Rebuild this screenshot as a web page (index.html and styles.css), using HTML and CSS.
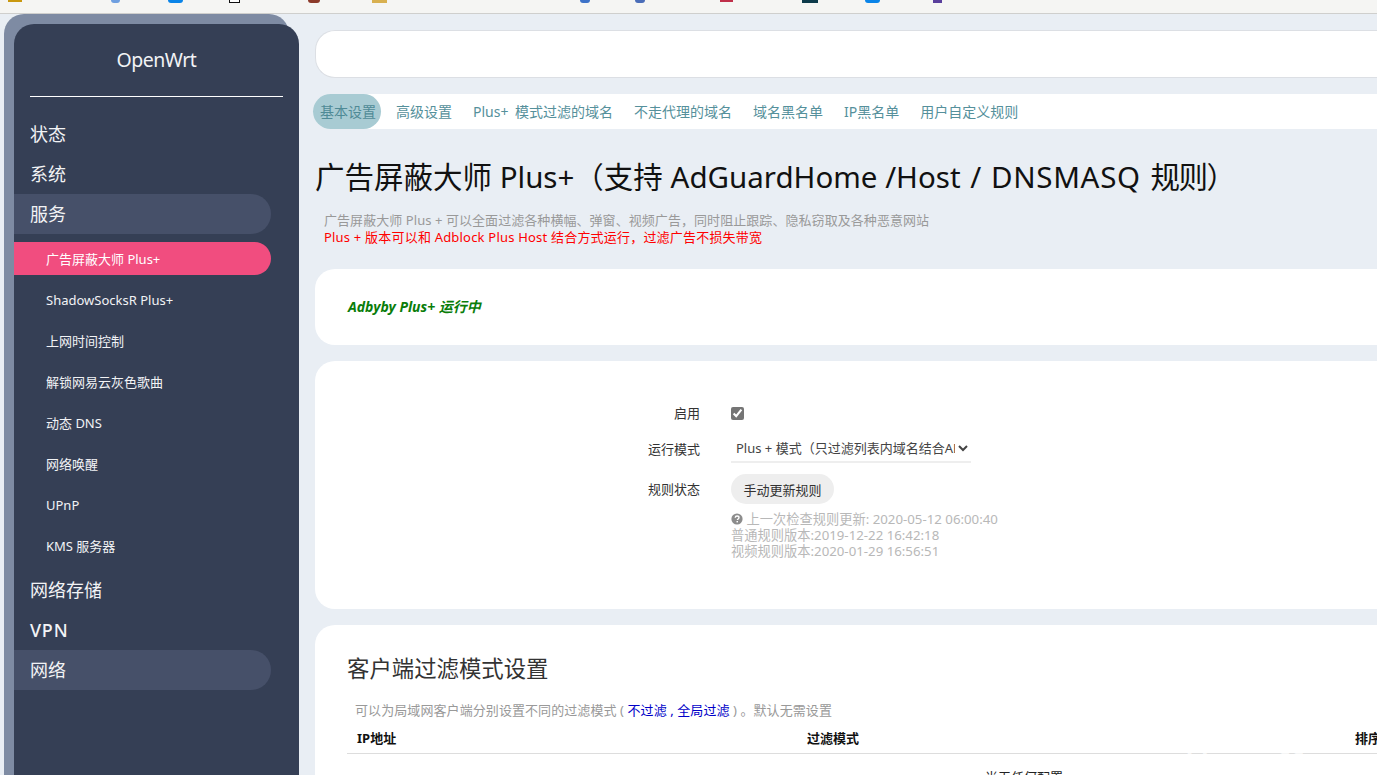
FILE: index.html
```html
<!DOCTYPE html>
<html lang="zh-CN">
<head>
<meta charset="utf-8">
<title>OpenWrt</title>
<link rel="stylesheet" href="styles.css">
</head>
<body>
<div class="bookmarks">
  <span class="bm bm1"></span><span class="bm bm2"></span><span class="bm bm3"></span><span class="bm bm4"></span>
  <span class="bm bm5"></span><span class="bm bm6"></span><span class="bm bm7"></span><span class="bm bm8"></span>
  <span class="bm bm9"></span><span class="bm bm10"></span><span class="bm bm11"></span><span class="bm bm12"></span>
</div>
<div class="app">
  <aside class="side-back">
    <nav class="sidebar">
      <div class="brand">OpenWrt</div>
      <div class="brand-rule"></div>
      <ul class="menu">
        <li class="menu-item">状态</li>
        <li class="menu-item">系统</li>
        <li class="menu-item menu-open">服务</li>
        <li class="sub-item sub-active">广告屏蔽大师 Plus+</li>
        <li class="sub-item">ShadowSocksR Plus+</li>
        <li class="sub-item">上网时间控制</li>
        <li class="sub-item">解锁网易云灰色歌曲</li>
        <li class="sub-item">动态 DNS</li>
        <li class="sub-item">网络唤醒</li>
        <li class="sub-item">UPnP</li>
        <li class="sub-item">KMS 服务器</li>
        <li class="menu-item">网络存储</li>
        <li class="menu-item menu-latin">VPN</li>
        <li class="menu-item menu-open">网络</li>
      </ul>
    </nav>
  </aside>
  <main class="main">
    <div class="top-card"></div>
    <ul class="tabs">
      <li class="tab tab-active">基本设置</li>
      <li class="tab">高级设置</li>
      <li class="tab">Plus+ 模式过滤的域名</li>
      <li class="tab">不走代理的域名</li>
      <li class="tab">域名黑名单</li>
      <li class="tab">IP黑名单</li>
      <li class="tab">用户自定义规则</li>
    </ul>
    <h2 class="page-title">广告屏蔽大师 Plus+（支持 AdGuardHome <span class="title-rules">/Host / <span class="title-dns">DNSMASQ</span> <span class="title-tail">规则）</span></span></h2>
    <div class="page-desc">
      <div>广告屏蔽大师 Plus + 可以全面过滤各种横幅、弹窗、视频广告，同时阻止跟踪、隐私窃取及各种恶意网站</div>
      <div class="desc-red">Plus + 版本可以和 Adblock Plus Host 结合方式运行，过滤广告不损失带宽</div>
    </div>
    <section class="card status-card"><em class="status">Adbyby Plus+ 运行中</em></section>
    <section class="card form-card">
      <div class="row row-check">
        <label class="field-label">启用</label>
        <input class="check" type="checkbox" checked>
      </div>
      <div class="row row-select">
        <label class="field-label">运行模式</label>
        <select class="select"><option>Plus + 模式（只过滤列表内域名结合ABP规则）</option></select>
      </div>
      <div class="row row-button">
        <label class="field-label">规则状态</label>
        <div class="field-body">
          <button class="btn" type="button">手动更新规则</button>
          <div class="help">
            <div><svg class="help-icon" viewBox="0 0 12 12"><circle cx="6" cy="6" r="5.6" fill="#8c8c8c"/><path d="M4.2 4.7c.1-1.1.9-1.7 1.9-1.7 1.1 0 1.9.7 1.9 1.6 0 1.3-1.6 1.4-1.6 2.5" fill="none" stroke="#fff" stroke-width="1.4"/><rect x="5.5" y="8" width="1.5" height="1.4" fill="#fff"/></svg> 上一次检查规则更新: 2020-05-12 06:00:40</div>
            <div>普通规则版本:2019-12-22 16:42:18</div>
            <div>视频规则版本:2020-01-29 16:56:51</div>
          </div>
        </div>
      </div>
    </section>
    <section class="card table-card">
      <h3 class="section-title">客户端过滤模式设置</h3>
      <div class="section-desc">可以为局域网客户端分别设置不同的过滤模式 ( <span class="blue">不过滤 , 全局过滤</span> ) 。默认无需设置</div>
      <div class="thead">
        <span class="th th-ip">IP地址</span>
        <span class="th th-mode">过滤模式</span>
        <span class="th">排序</span>
      </div>
      <div class="empty">尚无任何配置</div>
    </section>
  </main>
</div>
<div class="watermark">bbs.nas66.com</div>
</body>
</html>
```
FILE: styles.css
```css
* { box-sizing: border-box; }
html, body { margin: 0; padding: 0; height: 775px; overflow: hidden; }
body {
  background: #e9eef4;
  font-family: "Noto Sans", "Noto Sans CJK SC", sans-serif;
  font-size: 13px;
  color: #333;
  position: relative;
}
ul { list-style: none; margin: 0; padding: 0; }

.bookmarks {
  height: 14px;
  background: #f5f5f3;
  border-bottom: 1px solid #cfcfcd;
  display: flex;
  align-items: flex-start;
}
.bm { display: block; height: 2px; flex: none; }
.bm1 { margin-left: 8px; width: 14px; background: #c9980f; }
.bm2 { margin-left: 89px; width: 9px; height: 3px; background: #6f9fe0; border-radius: 0 0 4px 4px; }
.bm3 { margin-left: 48px; width: 15px; height: 3px; background: #0a84e8; border-radius: 0 0 3px 3px; }
.bm4 { margin-left: 46px; width: 11px; height: 3px; background: #fff; border: 1px solid #111; border-top: 0; }
.bm5 { margin-left: 68px; width: 12px; height: 3px; background: #8c3a2a; border-radius: 0 0 4px 4px; }
.bm6 { margin-left: 52px; width: 15px; height: 3px; background: #d8b050; }
.bm7 { margin-left: 193px; width: 10px; height: 3px; background: #3d72c8; border-radius: 0 0 5px 5px; }
.bm8 { margin-left: 45px; width: 10px; height: 3px; background: #4a6db8; border-radius: 0 0 4px 4px; }
.bm9 { margin-left: 75px; width: 13px; height: 2px; background: #c0304a; }
.bm10 { margin-left: 69px; width: 16px; height: 3px; background: #0d3a4a; }
.bm11 { margin-left: 47px; width: 15px; height: 3px; background: #0a84e8; border-radius: 0 0 3px 3px; }
.bm12 { margin-left: 53px; width: 9px; height: 3px; background: #5a3f9c; }

.app { display: flex; align-items: stretch; height: 761px; overflow: hidden; }

.side-back {
  flex: none;
  width: 285px;
  margin-left: 4px;
  padding: 10px 0 0 10px;
  background: #7e8ba3;
  border-radius: 20px 20px 0 0;
}
.sidebar {
  width: 285px;
  height: 100%;
  background: #353f55;
  border-radius: 20px 20px 0 0;
  color: #f2f3f5;
}
.brand {
  height: 72px;
  padding-top: 22px;
  text-align: center;
  font-size: 19.5px;
  line-height: 28px;
  letter-spacing: -.5px;
}
.brand-rule { height: 1px; background: #fff; margin: 0 16px; }
.menu { padding-top: 17px; }
.menu-item {
  height: 40px;
  width: 257px;
  padding-left: 16px;
  font-size: 18px;
  line-height: 40px;
  border-radius: 0 20px 20px 0;
}
.menu-latin { font-weight: 500; letter-spacing: .8px; }
.menu-open { background: #465069; margin-bottom: 8px; }
.menu-item:last-child { margin-bottom: 0; }
.sub-item {
  height: 33px;
  width: 257px;
  margin-bottom: 8px;
  padding-left: 32px;
  font-size: 13px;
  line-height: 35px;
  border-radius: 0 17px 17px 0;
}
.sub-active { background: #f14d7f; color: #fff; }

.main {
  flex: none;
  width: 1100px;
  margin-left: 26px;
  padding-top: 16px;
}
.top-card {
  height: 48px;
  background: #fff;
  border: 1px solid #dcdfe4;
  border-right: 0;
  border-radius: 20px 0 0 20px;
}
.tabs {
  display: flex;
  height: 35px;
  margin: 16px 0 0 -2px;
  background: #fff;
  border-radius: 18px 0 0 18px;
  color: #55909b;
  font-size: 14px;
  line-height: 36px;
  word-spacing: 3px;
}
.tab { padding: 0 7px; margin-right: 7px; white-space: nowrap; }
.tab-active { width: 68px; margin-right: 8px; padding: 0 0 0 7px; background: #a8cbd3; border-radius: 18px; color: #4f8a96; }

.page-title {
  margin: 28px 0 0;
  font-size: 29.5px;
  line-height: 40px;
  font-weight: 400;
  color: #111;
  white-space: nowrap;
}
.title-rules { word-spacing: 2px; }
.title-dns { letter-spacing: .7px; }
.title-tail { letter-spacing: -1.5px; }
.page-desc {
  margin: 15px 0 0 9px;
  font-size: 13px;
  line-height: 17px;
  letter-spacing: .06px;
  color: #999;
}
.desc-red { color: #f00; letter-spacing: .2px; }

.card { background: #fff; border-radius: 20px 0 0 20px; margin-top: 16px; }
.status-card { margin-top: 23px; height: 76px; padding: 28px 33px 0; }
.status { font-weight: 700; color: #0a7d0a; font-size: 14px; line-height: 20px; }

.form-card { height: 248px; padding-top: 33px; }
.row { display: flex; align-items: flex-start; }
.field-label {
  flex: none;
  width: 385px;
  margin-right: 31px;
  text-align: right;
  font-size: 13px;
  line-height: 20px;
  color: #333;
}
.row-check { height: 37px; padding-top: 9px; }
.check { margin: 4px 0 0; width: 13px; height: 13px; accent-color: #757575; }
.row-select { height: 43px; padding-top: 8px; }
.select {
  width: 240px;
  height: 29px;
  margin-top: -5px;
  padding: 0 0 0 1px;
  border: 0;
  border-bottom: 2px solid #eee;
  background: #fff;
  font: inherit;
  font-size: 13px;
  color: #444;
  outline: none;
}
.row-button .field-label { margin-top: 5px; }
.btn {
  display: block;
  height: 30px;
  width: 103px;
  padding: 0;
  border: 0;
  border-radius: 15px;
  background: #eee;
  font: inherit;
  font-size: 13px;
  color: #333;
}
.help { margin-top: 7px; font-size: 13.25px; line-height: 16px; color: #b8b8b8; }
.help-icon { width: 12px; height: 12px; vertical-align: -1px; }

.table-card { height: 200px; padding: 26px 0 0 32px; }
.section-title { margin: 0; font-size: 22.4px; line-height: 36px; font-weight: 400; color: #333; }
.section-desc { margin: 14px 0 0 8px; font-size: 13px; line-height: 18px; letter-spacing: .08px; color: #999; }
.blue { color: #0000c8; }
.thead {
  display: flex;
  height: 29px;
  margin-top: 6px;
  padding-left: 10px;
  border-bottom: 1px solid #ddd;
  font-size: 13px;
  font-weight: 700;
  line-height: 26px;
  color: #111;
}
.th { flex: none; }
.th-ip { width: 450px; }
.th-mode { width: 548px; }
.empty {
  margin-top: 13px;
  padding-left: 638px;
  font-size: 13px;
  line-height: 20px;
  color: #222;
}
.watermark {
  position: absolute;
  left: 1186px;
  top: 747px;
  font-size: 24px;
  font-weight: 700;
  line-height: 26px;
  color: #fff;
  opacity: .75;
  white-space: nowrap;
}
```
